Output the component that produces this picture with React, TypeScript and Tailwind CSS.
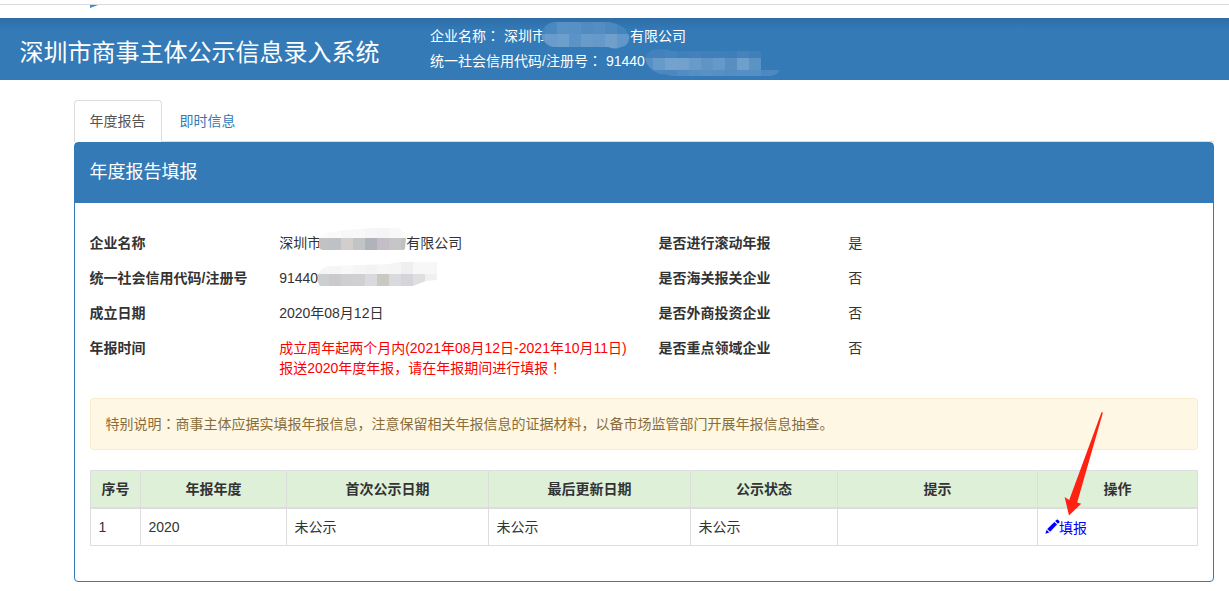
import type { ReactNode } from 'react';

type Column = { title: string; width: string };

const columns: Column[] = [
  { title: '序号', width: 'w-[50px]' },
  { title: '年报年度', width: 'w-[146px]' },
  { title: '首次公示日期', width: 'w-[202px]' },
  { title: '最后更新日期', width: 'w-[202px]' },
  { title: '公示状态', width: 'w-[147px]' },
  { title: '提示', width: 'w-[200px]' },
  { title: '操作', width: 'w-[160px]' },
];

const reports = [
  { no: 1, year: '2020', first: '未公示', updated: '未公示', status: '未公示', hint: '' },
];

// 居中标点
function Mark({ children }: { children: ReactNode }) {
  return <span className="font-['Noto_Sans_CJK_TC',sans-serif] leading-none">{children}</span>;
}

type MosaicProps = {
  id: string;
  className: string;
  width: number;
  height: number;
  shape: string;
  rows: { y: number; h: number; x: number; size: number; colors: string[] }[];
};

// 马赛克遮挡
function Mosaic({ id, className, width, height, shape, rows }: MosaicProps) {
  return (
    <svg className={className} width={width} height={height} viewBox={`0 0 ${width} ${height}`}>
      <clipPath id={id}>
        <path d={shape} />
      </clipPath>
      <g clipPath={`url(#${id})`}>
        {rows.map((row) =>
          row.colors.map((color, i) => (
            <rect
              key={`${row.y}-${i}`}
              x={row.x + i * row.size}
              y={row.y}
              width={row.size}
              height={row.h}
              fill={color}
            />
          )),
        )}
      </g>
    </svg>
  );
}

function PencilIcon() {
  return (
    <svg className="mr-[-1px] mt-[-3px] size-[15px] shrink-0" viewBox="0 0 15 15" fill="#00f">
      <path d="M0.3 14.7 L1.6 10.7 L4.3 13.4 Z" />
      <path d="M2.2 9.9 L9.4 2.9 L12.1 5.6 L5.1 12.7 Z" />
      <path d="M10.2 2.1 L11.6 0.7 Q12.3 0.2 12.9 0.7 L14.3 2.1 Q14.8 2.7 14.3 3.4 L12.9 4.8 Z" />
    </svg>
  );
}

function Header() {
  return (
    <header className="flex h-[62px] bg-[#337ab7] bg-[linear-gradient(#2e6da6,#337ab7_12px)] text-white">
      <h1 className="w-[430px] pl-[19.5px] pt-[17px] text-[24px] leading-[36px]">
        深圳市商事主体公示信息录入系统
      </h1>
      <div className="pt-[6px] leading-[25px]">
        <p className="relative flex">
          <span>
            企业名称<Mark>：</Mark>
          </span>
          <span className="ml-[4px]">深圳市</span>
          <span className="ml-[84px]">有限公司</span>
          <Mosaic
            id="header-name"
            className="absolute left-[111px] top-[-2px]"
            width={88}
            height={27}
            shape="M13 0H68Q85 3 88 14V17Q87 24 80 25Q75 28 67 25H12Q3 23 0 13Q3 1 13 0Z"
            rows={[
              { y: 0, h: 12, x: -8, size: 12, colors: ['#4583bc', '#4b88bf', '#5991c4', '#5790c4', '#518bc1', '#548dc2', '#4d89bf', '#4583bc', '#3c7fb9'] },
              { y: 12, h: 15, x: -8, size: 12, colors: ['#6297c7', '#699ccb', '#6d9fcd', '#5c93c6', '#689bca', '#6499c9', '#709fcc', '#6298c9', '#6197c8'] },
            ]}
          />
        </p>
        <p className="relative flex">
          <span>
            统一社会信用代码/注册号<Mark>：</Mark>
          </span>
          <span className="ml-[4px]">91440</span>
          <Mosaic
            id="header-code"
            className="absolute left-[215px] top-[0px]"
            width={136}
            height={27}
            shape="M13 0Q21 0 27 2H116V21H135Q132 27 124 27H27Q20 25 15 25Q3 21 0 10Q3 0 13 0Z"
            rows={[
              { y: 0, h: 9, x: -4, size: 12, colors: ['#4281bb', '#4281bb', '#4684bd', '#4080ba', '#4281bb', '#4080ba', '#4080ba', '#3f7fb9', '#4483bc', '#4080ba', '#3b7db8', '#3b7db8'] },
              { y: 9, h: 12, x: -4, size: 12, colors: ['#5790c4', '#659ac9', '#74a2ce', '#72a1cd', '#699bc9', '#5e94c6', '#6699c8', '#578fc3', '#6f9fcb', '#5c93c5', '#347bb7', '#347bb7'] },
              { y: 21, h: 6, x: -4, size: 12, colors: ['#4c88bf', '#4c88bf', '#4c88bf', '#528cc1', '#568fc3', '#5991c4', '#568fc3', '#548dc2', '#568fc3', '#568fc3', '#4d89c0', '#4b88bf'] },
            ]}
          />
        </p>
      </div>
    </header>
  );
}

function Info({ label, children }: { label: string; children: ReactNode }) {
  return (
    <>
      <dt className="pl-[14.5px] font-bold">{label}</dt>
      <dd className="whitespace-nowrap pl-[14.5px]">{children}</dd>
    </>
  );
}

function CompanyInfo() {
  return (
    <dl className="-mx-[15px] grid grid-cols-[2fr_4fr_2fr_4fr] gap-y-[15px] leading-[20px]">
      <Info label="企业名称">
        <div className="relative flex">
          深圳市
          <span className="ml-[85px]">有限公司</span>
          <Mosaic
            id="company-name"
            className="absolute left-[40px] top-[-5px]"
            width={88}
            height={22}
            shape="M0 10Q5 4 18 3L52 0H79Q86 3 87 10L86 21Q85 22 84 22H3Q0 21 0 19Z"
            rows={[
              { y: 0, h: 10, x: -2, size: 12, colors: ['#fbfbfb', '#fafafa', '#f7f7f7', '#f8f8f8', '#f6f6f6', '#f5f5f6', '#f8f8f8', '#fbfbfb'] },
              { y: 10, h: 12, x: -2, size: 12, colors: ['#c2c2c4', '#bec2c7', '#d3cdcb', '#c1c5c6', '#b1b3bb', '#c4bfc6', '#c6c5c8', '#c0c0c1'] },
            ]}
          />
        </div>
      </Info>
      <Info label="是否进行滚动年报">是</Info>

      <Info label="统一社会信用代码/注册号">
        <div className="relative">
          91440
          <Mosaic
            id="company-code"
            className="absolute left-[39px] top-[-6px]"
            width={120}
            height={25}
            shape="M0 12Q4 4 14 4L70 2L82 0H119V18L108 19L95 24H2Q-1 20 0 12Z"
            rows={[
              { y: 0, h: 12, x: -1, size: 12, colors: ['#f5f5f5', '#f5f5f5', '#f8f8f8', '#f5f5f5', '#f3f3f3', '#f6f6f6', '#f5f5f5', '#efefef', '#f7f7f7', '#f6f8f7'] },
              { y: 12, h: 13, x: -1, size: 12, colors: ['#cbcfd2', '#cacacc', '#cfced1', '#d0d0d2', '#dadade', '#cac8c3', '#d9dadd', '#d5d5d9', '#dfdfdf', '#eff0f0'] },
            ]}
          />
        </div>
      </Info>
      <Info label="是否海关报关企业">否</Info>

      <Info label="成立日期">2020年08月12日</Info>
      <Info label="是否外商投资企业">否</Info>

      <Info label="年报时间">
        <p className="text-[#f00]">
          成立周年起两个月内(2021年08月12日-2021年10月11日)
          <br />
          报送2020年度年报，请在年报期间进行填报<Mark>！</Mark>
        </p>
      </Info>
      <Info label="是否重点领域企业">否</Info>
    </dl>
  );
}

function ReportTable() {
  const cell = 'border border-[#ddd] pl-[7.5px]';

  return (
    <table className="w-[1107px] table-fixed border-collapse">
      <thead>
        <tr className="h-[37px] bg-[#dff0d8]">
          {columns.map((col) => (
            <th key={col.title} className={`${col.width} border border-b-2 border-[#ddd] font-bold`}>
              {col.title}
            </th>
          ))}
        </tr>
      </thead>
      <tbody>
        {reports.map((report) => (
          <tr key={report.no} className="h-[38px]">
            <td className={cell}>{report.no}</td>
            <td className={cell}>{report.year}</td>
            <td className={cell}>{report.first}</td>
            <td className={cell}>{report.updated}</td>
            <td className={cell}>{report.status}</td>
            <td className={cell}>{report.hint}</td>
            <td className="border border-[#ddd] pl-[7px]">
              <a href="#" className="relative flex items-center pt-[2px] text-[#00f]">
                <PencilIcon />
                填报
                {/* 指示箭头 */}
                <svg
                  className="pointer-events-none absolute left-[16px] top-[-105px]"
                  width="44"
                  height="106"
                  viewBox="0 0 44 106"
                >
                  <path
                    d="M40.4 1.5 Q41.3 .5 41.8 2 L16.2 91.4 L20.2 92.8 L8 104.4 L3.6 86 L8.2 89 Z"
                    fill="#ff2213"
                  />
                </svg>
              </a>
            </td>
          </tr>
        ))}
      </tbody>
    </table>
  );
}

export default function App() {
  return (
    <div className="h-[591px] w-[1229px] overflow-hidden bg-white font-['Liberation_Sans','Noto_Sans_CJK_SC',sans-serif] text-[14px] leading-[20px] text-[#333]">
      {/* 顶部边线 */}
      <div className="h-[18px] pt-[4px]">
        <div className="border-t border-[#dadade] pl-[90px]">
          <svg className="block" width="8" height="3" viewBox="0 0 8 3">
            <path d="M0 0H8L0 3Z" fill="#3c8bd9" />
          </svg>
        </div>
      </div>

      <Header />

      <main className="ml-[74px] w-[1140px] pt-[20px]">
        {/* 标签页 */}
        <nav className="flex h-[42px] border-b border-[#ddd]">
          <a
            href="#"
            className="h-[42px] w-[88px] rounded-t-[4px] border border-b-0 border-[#ddd] bg-white pl-[14.5px] pt-[10px] text-[#555]"
          >
            年度报告
          </a>
          <a href="#" className="pl-[17.5px] pt-[11px] text-[#337ab7]">
            即时信息
          </a>
        </nav>

        <section className="h-[440px] rounded-[4px] border border-[#337ab7]">
          <h2 className="h-[60px] bg-[#337ab7] pl-[14.5px] pt-[15px] text-[18px] leading-[28px] text-white">
            年度报告填报
          </h2>
          <div className="px-[15px] pt-[30px]">
            <CompanyInfo />
            <p className="my-[20px] rounded-[4px] border border-[#faebcc] bg-[#fef7e3] py-[15px] pl-[14.5px] text-[#8a6d3b]">
              特别说明<Mark>：</Mark>
              商事主体应据实填报年报信息，注意保留相关年报信息的证据材料，以备市场监管部门开展年报信息抽查。
            </p>
            <ReportTable />
          </div>
        </section>
      </main>
    </div>
  );
}
